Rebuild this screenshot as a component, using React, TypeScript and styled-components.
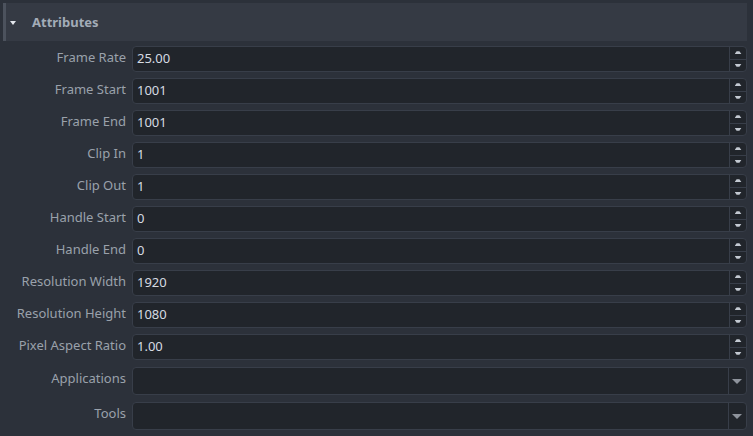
import React from "react";
import styled, { createGlobalStyle } from "styled-components";

const Global = createGlobalStyle`
  html, body { margin: 0; padding: 0; background: #2c313a; }
  body { font-family: "Noto Sans", "Open Sans", sans-serif; font-size: 13px; }
`;

const Page = styled.div`
  width: 753px;
  height: 436px;
  background: #2c313a;
  padding: 3px 6px 0 3px;
  box-sizing: border-box;
  overflow: hidden;
`;

const Header = styled.div`
  display: flex;
  align-items: center;
  height: 38px;
  background: #353a44;
  border-left: 3px solid #4c525d;
  box-sizing: border-box;
  padding-left: 4px;
  gap: 16px;
`;

const Caret = styled.span`
  width: 0;
  height: 0;
  margin-top: 1px;
  border-left: 3.5px solid transparent;
  border-right: 3.5px solid transparent;
  border-top: 4px solid #e4e8ee;
`;

const Title = styled.span`
  font-weight: 700;
  color: #a3acb8;
  font-size: 13px;
`;

const Form = styled.div`
  display: flex;
  flex-direction: column;
  gap: 6px;
  padding-top: 5px;
`;

const Row = styled.div<{ $combo?: boolean }>`
  display: grid;
  grid-template-columns: 123px 1fr;
  column-gap: 6px;
  align-items: start;
  height: ${(p) => (p.$combo ? "28px" : "26px")};
  margin-top: ${(p) => (p.$combo ? "1px" : "0")};
`;

const Label = styled.span`
  text-align: right;
  color: #9aa1ab;
  white-space: nowrap;
  line-height: 23px;
`;

const Field = styled.div`
  display: flex;
  height: 100%;
  background: #21252b;
  border: 1px solid #383e49;
  border-radius: 4px;
  box-sizing: border-box;
  overflow: hidden;
`;

const Value = styled.span`
  flex: 1;
  padding-left: 4px;
  color: #d6dbe2;
  line-height: 22px;
`;

const Spin = styled.div`
  width: 16px;
  display: flex;
  flex-direction: column;
  border-left: 1px solid #383e49;
`;

const SpinButton = styled.div<{ $down?: boolean }>`
  flex: 1;
  display: flex;
  align-items: center;
  justify-content: center;
  border-top: ${(p) => (p.$down ? "1px solid #383e49" : "none")};
`;

const Arrow = styled.span<{ $down?: boolean }>`
  width: 7px;
  height: 3px;
  background: #c3c9d1;
  clip-path: ${(p) =>
    p.$down
      ? "polygon(0 0, 100% 0, 70% 100%, 30% 100%)"
      : "polygon(30% 0, 70% 0, 100% 100%, 0 100%)"};
`;

const DropButton = styled.div`
  width: 17px;
  display: flex;
  align-items: center;
  justify-content: center;
  border-left: 1px solid #383e49;
`;

const DropArrow = styled.span`
  width: 0;
  height: 0;
  margin-right: 1px;
  border-left: 5px solid transparent;
  border-right: 5px solid transparent;
  border-top: 5px solid #8e939c;
`;

const spinRows: [string, string][] = [
  ["Frame Rate", "25.00"],
  ["Frame Start", "1001"],
  ["Frame End", "1001"],
  ["Clip In", "1"],
  ["Clip Out", "1"],
  ["Handle Start", "0"],
  ["Handle End", "0"],
  ["Resolution Width", "1920"],
  ["Resolution Height", "1080"],
  ["Pixel Aspect Ratio", "1.00"],
];

const comboRows = ["Applications", "Tools"];

export default function App() {
  return (
    <>
      <Global />
      <Page>
        <Header>
          <Caret />
          <Title>Attributes</Title>
        </Header>
        <Form>
          {spinRows.map(([label, value]) => (
            <Row key={label}>
              <Label>{label}</Label>
              <Field>
                <Value>{value}</Value>
                <Spin>
                  <SpinButton>
                    <Arrow />
                  </SpinButton>
                  <SpinButton $down>
                    <Arrow $down />
                  </SpinButton>
                </Spin>
              </Field>
            </Row>
          ))}
          {comboRows.map((label) => (
            <Row key={label} $combo>
              <Label>{label}</Label>
              <Field>
                <Value />
                <DropButton>
                  <DropArrow />
                </DropButton>
              </Field>
            </Row>
          ))}
        </Form>
      </Page>
    </>
  );
}
